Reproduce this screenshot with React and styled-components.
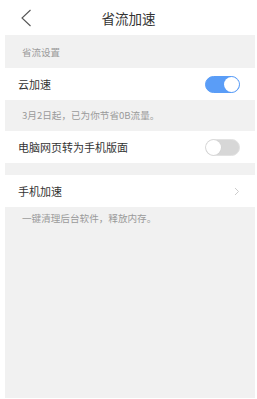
import React, { useState } from 'react';
import styled, { createGlobalStyle } from 'styled-components';

const GlobalStyle = createGlobalStyle`
  html, body {
    margin: 0;
    padding: 0;
    background: #ffffff;
  }
  body {
    font-family: "Noto Sans CJK SC", "Noto Sans", sans-serif;
  }
`;

const Page = styled.div`
  width: 257px;
  height: 399px;
  display: flex;
  flex-direction: column;
  background: #ffffff;
  overflow: hidden;
`;

const Header = styled.header`
  height: 35px;
  flex-shrink: 0;
  position: relative;
  display: flex;
  align-items: center;
  justify-content: center;
  background: #ffffff;
`;

const BackButton = styled.button`
  position: absolute;
  left: 17px;
  top: 8px;
  width: 18px;
  height: 20px;
  padding: 0;
  border: none;
  background: none;
  display: flex;
  align-items: center;
  justify-content: center;
`;

const Title = styled.h1`
  margin: 0;
  font-size: 13.5px;
  font-weight: 400;
  color: #333333;
  letter-spacing: 0;
`;

const Content = styled.main`
  flex: 1;
  margin: 0 2px 1px 5px;
  background: #f1f1f1;
  display: flex;
  flex-direction: column;
`;

const SectionTitle = styled.div`
  height: 33px;
  display: flex;
  align-items: center;
  padding-left: 17px;
  font-size: 9.5px;
  color: #9a9a9a;
`;

const Row = styled.div`
  height: 32px;
  display: flex;
  align-items: center;
  justify-content: space-between;
  padding: 0 15px 0 13px;
  background: #ffffff;
`;

const Label = styled.span`
  font-size: 11px;
  color: #333333;
`;

const Note = styled.div`
  height: ${p => p.$height || '31px'};
  line-height: ${p => p.$lineHeight || '31px'};
  padding-left: 17px;
  font-size: 9.6px;
  color: #9a9a9a;
  flex-shrink: 0;
`;

const Spacer = styled.div`
  height: 12px;
`;

const Toggle = styled.button`
  width: 35px;
  height: 17px;
  padding: 0;
  border-radius: 9px;
  border: 1px solid ${p => (p.$on ? '#5a9df7' : '#e2e2e2')};
  background: ${p => (p.$on ? '#5a9df7' : '#d7d7d7')};
  position: relative;
  box-sizing: border-box;
  cursor: pointer;
`;

const Knob = styled.span`
  position: absolute;
  top: 0;
  left: ${p => (p.$on ? '18px' : '0')};
  width: 15px;
  height: 15px;
  border-radius: 50%;
  background: #ffffff;
  box-shadow: ${p => (p.$on ? 'none' : '0 0 0 0.5px #d0d0d0')};
`;

const Switch = ({ on, onToggle }) => (
  <Toggle $on={on} onClick={onToggle}>
    <Knob $on={on} />
  </Toggle>
);

export default function App() {
  const [cloud, setCloud] = useState(true);
  const [mobile, setMobile] = useState(false);

  return (
    <Page>
      <GlobalStyle />
      <Header>
        <BackButton>
          <svg width="12" height="18" viewBox="0 0 12 18">
            <path d="M10.5 1 L2 9 L10.5 17" fill="none" stroke="#555" strokeWidth="1.1" />
          </svg>
        </BackButton>
        <Title>省流加速</Title>
      </Header>
      <Content>
        <SectionTitle>省流设置</SectionTitle>
        <Row>
          <Label>云加速</Label>
          <Switch on={cloud} onToggle={() => setCloud(!cloud)} />
        </Row>
        <Note>3月2日起，已为你节省0B流量。</Note>
        <Row>
          <Label>电脑网页转为手机版面</Label>
          <Switch on={mobile} onToggle={() => setMobile(!mobile)} />
        </Row>
        <Spacer />
        <Row>
          <Label>手机加速</Label>
          <svg width="6" height="9" viewBox="0 0 6 9">
            <path d="M1 1 L4.5 4.5 L1 8" fill="none" stroke="#cccccc" strokeWidth="1" />
          </svg>
        </Row>
        <Note $height="22px" $lineHeight="22px">一键清理后台软件，释放内存。</Note>
      </Content>
    </Page>
  );
}
